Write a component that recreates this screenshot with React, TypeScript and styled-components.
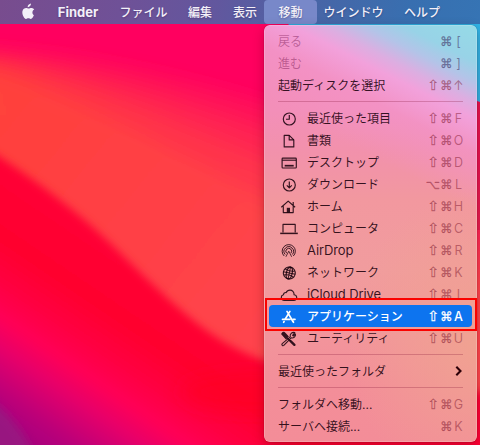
import React from 'react';
import styled, { createGlobalStyle, css } from 'styled-components';

const GlobalStyle = createGlobalStyle`
  * { box-sizing: border-box; }
  html, body { margin: 0; padding: 0; overflow: hidden; }
  body {
    font-family: Inter, "Noto Sans CJK JP", sans-serif;
    font-size: 12px;
    -webkit-font-smoothing: antialiased;
  }
`;

const Desktop = styled.div`
  position: relative;
  width: 480px;
  height: 445px;
  overflow: hidden;
  background: #ff0060;
`;

const WallpaperSvg = styled.svg`
  position: absolute;
  inset: 0;
`;

const MenuBar = styled.header`
  position: relative;
  display: flex;
  align-items: stretch;
  height: 24px;
  padding-left: 12px;
  color: #f3f0f8;
  background: linear-gradient(100deg, #784c8e 0%, #6f5197 25%, #62579e 45%, #4865a6 65%, #386fb0 85%, #3674b4 100%);
`;

const AppleSlot = styled.div`
  display: flex;
  align-items: center;
  width: 35px;
  padding: 0 0 1px 9px;
`;

const BarItem = styled.div<{ $bold?: boolean; $active?: boolean; $width: number; $inset?: number }>`
  display: flex;
  align-items: center;
  justify-content: center;
  width: ${(p) => p.$width}px;
  padding-top: ${(p) => (p.$bold ? 0 : 1)}px;
  padding-left: ${(p) => p.$inset ?? 0}px;
  white-space: nowrap;
  font-size: ${(p) => (p.$bold ? '13px' : '12px')};
  font-weight: ${(p) => (p.$bold ? 700 : 500)};
  line-height: 22px;
  border-radius: 4px;
  text-shadow: 0 1px 2px rgba(20, 0, 60, 0.3);
  ${(p) => p.$active && css`background: #7888c9;`}
`;

const Menu = styled.div`
  position: absolute;
  left: 264px;
  top: 25px;
  width: 213px;
  height: 417px;
  padding: 5px;
  border-radius: 6px;
  background:
    linear-gradient(207deg, #95dbe7 0, #98d3e7 34px, #b3c4e8 52px, #dcaee1 70px, rgba(242, 162, 221, 0.95) 85px, rgba(243, 148, 204, 0.6) 115px, rgba(243, 145, 188, 0) 165px),
    radial-gradient(ellipse 130px 150px at 100% 76%, #f0a291 0, rgba(240, 162, 145, 0) 100%),
    linear-gradient(180deg, #f38bb9 0, #f38fb9 85px, #f291ac 125px, #f2989f 175px, #f19c9e 245px, #f2969c 300px, #f38e99 360px, #f38d98 100%);
  box-shadow: inset 0 0 0 0.5px rgba(255, 255, 255, 0.35), 0 0 1px rgba(0, 0, 0, 0.5), 0 4px 12px rgba(60, 0, 0, 0.28);
`;

const Row = styled.div<{ $selected?: boolean; $disabled?: boolean }>`
  display: flex;
  align-items: center;
  height: 22px;
  padding: 0 9px;
  border-radius: 4px;
  color: rgba(25, 0, 12, 0.88);
  ${(p) => p.$disabled && css`color: rgba(120, 20, 80, 0.45);`}
  ${(p) => p.$selected && css`background: #0d74ef; color: #fff;`}
`;

const IconSlot = styled.span`
  display: flex;
  width: 29px;
  padding: 1px 0 0 1px;
`;

const Label = styled.span<{ $latin?: boolean; $strong?: boolean }>`
  flex: 1;
  padding-top: ${(p) => (p.$latin ? 1 : 2)}px;
  white-space: nowrap;
  line-height: ${(p) => (p.$latin ? 21 : 20)}px;
  font-size: ${(p) => (p.$latin ? '13px' : '12px')};
  letter-spacing: ${(p) => (p.$latin ? '-0.1px' : '0')};
  font-weight: ${(p) => (p.$strong ? 500 : 400)};
`;

const Keys = styled.span<{ $tone: 'normal' | 'cool' | 'selected' }>`
  display: grid;
  grid-template-columns: 14px 13px 11px;
  margin-right: -1px;
  padding-top: 1px;
  justify-items: center;
  align-items: center;
  height: 22px;
  line-height: 21px;
  font-weight: ${(p) => (p.$tone === 'selected' ? 500 : 400)};
  color: ${(p) =>
    p.$tone === 'selected' ? '#fff' : p.$tone === 'cool' ? 'rgba(70, 60, 110, 0.6)' : 'rgba(125, 20, 45, 0.48)'};
`;

const Sym = styled.span<{ $shift?: boolean }>`
  font-family: "DejaVu Sans", sans-serif;
  font-size: ${(p) => (p.$shift ? 14 : 12.5)}px;
  -webkit-text-stroke: 0.25px currentColor;
`;

const Letter = styled.span`
  font-size: 12.5px;
`;

const Separator = styled.div`
  height: 11px;
  padding: 5px 9px;
  &::before {
    content: "";
    display: block;
    height: 1px;
    background: rgba(130, 20, 50, 0.27);
  }
`;

const Callout = styled.div`
  position: absolute;
  left: 265px;
  top: 298px;
  width: 212px;
  height: 33px;
  border: 2px solid #fb0200;
`;

function Wallpaper() {
  return (
    <WallpaperSvg width="480" height="445" viewBox="0 0 480 445">
      <defs>
        <filter id="soft" x="-30%" y="-30%" width="160%" height="160%"><feGaussianBlur stdDeviation="9" /></filter>
        <filter id="edge" x="-30%" y="-30%" width="160%" height="160%"><feGaussianBlur stdDeviation="4" /></filter>
        <linearGradient id="orange" x1="0" y1="60" x2="300" y2="300" gradientUnits="userSpaceOnUse">
          <stop offset="0" stopColor="#ff4638" />
          <stop offset="0.5" stopColor="#ff4444" />
          <stop offset="1" stopColor="#ff484b" />
        </linearGradient>
        <linearGradient id="red" x1="0" y1="160" x2="-122" y2="340" gradientUnits="userSpaceOnUse">
          <stop offset="0" stopColor="#ff0036" />
          <stop offset="0.3" stopColor="#ff002e" />
          <stop offset="0.48" stopColor="#ff0043" />
          <stop offset="0.6" stopColor="#ff0057" />
          <stop offset="0.72" stopColor="#e6006a" />
          <stop offset="0.9" stopColor="#b8007a" />
          <stop offset="1" stopColor="#a8067c" />
        </linearGradient>
      </defs>
      <rect width="480" height="445" fill="#ff005f" />
      <g fill="url(#orange)" filter="url(#soft)">
        <path d="M-60 46 L0 50 Q130 58 300 114 L520 200 V480 H-60Z" opacity="0.25" />
        <path d="M-60 51 L0 55 Q120 74 300 142 L520 230 V480 H-60Z" opacity="0.35" />
        <path d="M-60 57 L0 61 Q110 88 300 175 L520 260 V480 H-60Z" opacity="0.5" />
        <path d="M-60 66 L0 72 Q100 108 300 215 L520 290 V480 H-60Z" opacity="0.75" />
      </g>
      <path d="M-60 118 L0 157 C50 190 85 219 110 243 C140 272 175 308 210 333 C240 353 260 360 290 368 C350 390 400 392 540 392 V520 H-60Z" fill="url(#red)" filter="url(#edge)" />
      <ellipse cx="255" cy="392" rx="75" ry="20" fill="#ff0022" opacity="0.6" filter="url(#soft)" />
      <path d="M-40 385 Q10 400 37 460 H-40Z" fill="#951e82" filter="url(#edge)" opacity="0.8" />
      <path d="M286 23 H480 V102 Q350 60 286 23Z" fill="#2eb3e6" />
      <path d="M470 102 H480 V230 H470Z" fill="#dd1a4c" opacity="0.7" />
    </WallpaperSvg>
  );
}

const AppleLogo = () => (
  <svg width="14" height="17" viewBox="0 0 14 17" fill="#f3f0f8">
    <path d="M9.9 .5c.1 1-.3 1.9-.9 2.6-.6.7-1.4 1.2-2.3 1.1-.1-.9.3-1.8.9-2.4C8.200 1.100 9.100.6 9.900.5Z" />
    <path d="M12.900 12.100c-.3.800-.5 1.100-.9 1.800-.6.900-1.300 2-2.300 2-.9 0-1.100-.6-2.300-.6s-1.500.6-2.400.6c-1 0-1.700-1-2.300-1.900C1.100 11.500.9 8.400 2 6.700c.7-1.100 1.900-1.800 3-1.800 1.100 0 1.800.6 2.700.6.900 0 1.500-.6 2.700-.6 1 0 2.100.5 2.800 1.500-2.500 1.400-2.100 4.700-.3 5.700Z" />
  </svg>
);

type IconName = 'recent' | 'doc' | 'desktop' | 'download' | 'home' | 'computer' | 'airdrop' | 'network' | 'cloud' | 'apps' | 'tools';

const glyphs: Record<IconName, React.ReactNode> = {
  recent: (<><circle cx="10.300" cy="9" r="6" /><path d="M10.300 5v4.200H7" /></>),
  doc: (<><path d="M5.200 3.300h5l4.600 4.600v7H5.200Z" /><path d="M10.200 3.300v4.600h4.600" /></>),
  desktop: (<><rect x="3.100" y="4.100" width="14.200" height="9.900" rx=".8" /><path d="M3.200 6.200h14" /><path d="M5.700 11.700h9" strokeWidth="1.700" /></>),
  download: (<><circle cx="10.300" cy="9" r="6" /><path d="M10.300 5.600v6M7.800 9.300l2.500 2.600 2.500-2.600" /></>),
  home: (<><path d="M2.300 9.300 9.200 3.100l6.900 6.200M14.200 7.500V3.900M4.300 8.200v6.400h9.900V8.200" /><rect x="7.800" y="9.800" width="3.200" height="4.800" fill="currentColor" stroke="none" /></>),
  computer: (<><path d="M4 12.600V4.400h12.200v8.200" /><path d="M1.200 13.400h17.600" strokeWidth="1.500" /></>),
  airdrop: (<>
    <path d="M5.200 14A6.600 6.600 0 1 1 14.300 14" strokeWidth=".95" />
    <path d="M6.200 12.500a4.700 4.700 0 1 1 7.100 0" strokeWidth=".95" />
    <path d="M7.600 11.200a2.900 2.900 0 1 1 4.300 0" strokeWidth=".95" />
    <path d="M9.750 9.200 6.900 14.800M9.750 9.200l2.900 5.600" strokeWidth=".8" />
  </>),
  network: (
    <g transform="rotate(12 10.3 9)">
      <circle cx="10.300" cy="9" r="6" />
      <ellipse cx="10.300" cy="9" rx="2.900" ry="6" />
      <path d="M4.300 9h12M10.300 3v12M5.300 5.900q5 2 10 0M5.300 12.100q5-2 10 0" strokeWidth=".95" />
    </g>
  ),
  cloud: (<path d="M5.600 14.400h9c2.300 0 3.300-1.700 3.100-3.200-.2-1.400-1.300-2.300-2.600-2.400.1-3-1.900-4.700-4.100-4.700-2 0-3.200 1.100-3.800 2.500-1.500-.3-2.700.7-2.700 2.200-1.400.3-2.200 1.300-2.200 2.500 0 1.800 1.300 3.100 3.300 3.100Z" />),
  apps: (<><path d="M8 3.400 13.800 13.200M10.900 3.400 6.300 11" strokeWidth="1.700" strokeLinecap="round" /><path d="M3.500 11.300H11M14 11.300h2" strokeWidth="1.700" strokeLinecap="round" /><path d="m5.100 13.500-.5.900" strokeWidth="1.600" strokeLinecap="round" /><path d="m13.900 13.300.6 1" strokeWidth="1.700" strokeLinecap="round" /></>),
  tools: (<>
    <path d="M13.600 5.300 15.800 2.600a3.500 3.500 0 0 0-4.500 4.300L3.200 13.700c-1 1 .6 2.600 1.600 1.700l7.400-7.500c2.500.6 4.800-1.400 4.200-3.900l-1.900 2Z" strokeWidth="1.100" />
    <path d="M2.600 4.300C2.500 2.600 4.300 1.600 5.600 2.300l4 4.300-2.600 2.600Z" fill="currentColor" strokeWidth=".6" />
    <path d="m8.300 7.900 3.200 3.300" strokeWidth="1.500" />
    <path d="m11.600 11.200 3.800 3.600" strokeWidth="2.400" strokeLinecap="round" />
  </>),
};

const MenuIcon = ({ name }: { name: IconName }) => (
  <svg width="22" height="18" viewBox="0 0 22 18" fill="none" stroke="currentColor" strokeWidth="1.150" strokeLinejoin="round">
    {glyphs[name]}
  </svg>
);

const Chevron = () => (
  <svg width="8" height="12" viewBox="0 0 8 12" fill="none" stroke="#2c0008" strokeWidth="2.100">
    <path d="M1.300 1.700 5.500 6 1.300 10.300" />
  </svg>
);

interface Item {
  label: string;
  keys?: [string, string, string];
  icon?: IconName;
  disabled?: boolean;
  selected?: boolean;
  latin?: boolean;
  submenu?: boolean;
}

const groups: Item[][] = [
  [
    { label: '戻る', keys: ['', '⌘', '['], disabled: true },
    { label: '進む', keys: ['', '⌘', ']'], disabled: true },
    { label: '起動ディスクを選択', keys: ['⇧', '⌘', '↑'] },
  ],
  [
    { label: '最近使った項目', keys: ['⇧', '⌘', 'F'], icon: 'recent' },
    { label: '書類', keys: ['⇧', '⌘', 'O'], icon: 'doc' },
    { label: 'デスクトップ', keys: ['⇧', '⌘', 'D'], icon: 'desktop' },
    { label: 'ダウンロード', keys: ['⌥', '⌘', 'L'], icon: 'download' },
    { label: 'ホーム', keys: ['⇧', '⌘', 'H'], icon: 'home' },
    { label: 'コンピュータ', keys: ['⇧', '⌘', 'C'], icon: 'computer' },
    { label: 'AirDrop', keys: ['⇧', '⌘', 'R'], icon: 'airdrop', latin: true },
    { label: 'ネットワーク', keys: ['⇧', '⌘', 'K'], icon: 'network' },
    { label: 'iCloud Drive', keys: ['⇧', '⌘', 'I'], icon: 'cloud', latin: true },
    { label: 'アプリケーション', keys: ['⇧', '⌘', 'A'], icon: 'apps', selected: true },
    { label: 'ユーティリティ', keys: ['⇧', '⌘', 'U'], icon: 'tools' },
  ],
  [{ label: '最近使ったフォルダ', submenu: true }],
  [
    { label: 'フォルダへ移動...', keys: ['⇧', '⌘', 'G'] },
    { label: 'サーバへ接続...', keys: ['', '⌘', 'K'] },
  ],
];

const MenuRow = ({ item }: { item: Item }) => (
  <Row $selected={item.selected} $disabled={item.disabled}>
    {item.icon && <IconSlot><MenuIcon name={item.icon} /></IconSlot>}
    <Label $latin={item.latin} $strong={item.selected}>{item.label}</Label>
    {item.keys && (
      <Keys $tone={item.selected ? 'selected' : item.disabled ? 'cool' : 'normal'}>
        <Sym $shift={item.keys[0] === '⇧'}>{item.keys[0]}</Sym>
        <Sym>{item.keys[1]}</Sym>
        <Letter>{item.keys[2]}</Letter>
      </Keys>
    )}
    {item.submenu && <Chevron />}
  </Row>
);

export default function App() {
  return (
    <>
      <GlobalStyle />
      <Desktop>
        <Wallpaper />
        <MenuBar>
          <AppleSlot><AppleLogo /></AppleSlot>
          <BarItem $bold $width={62}>Finder</BarItem>
          <BarItem $width={69}>ファイル</BarItem>
          <BarItem $width={44}>編集</BarItem>
          <BarItem $width={42} $inset={4}>表示</BarItem>
          <BarItem $active $width={53}>移動</BarItem>
          <BarItem $width={73}>ウインドウ</BarItem>
          <BarItem $width={64}>ヘルプ</BarItem>
        </MenuBar>
        <Menu>
          {groups.map((group, i) => (
            <React.Fragment key={i}>
              {i > 0 && <Separator />}
              {group.map((item) => <MenuRow key={item.label} item={item} />)}
            </React.Fragment>
          ))}
        </Menu>
        <Callout />
      </Desktop>
    </>
  );
}
